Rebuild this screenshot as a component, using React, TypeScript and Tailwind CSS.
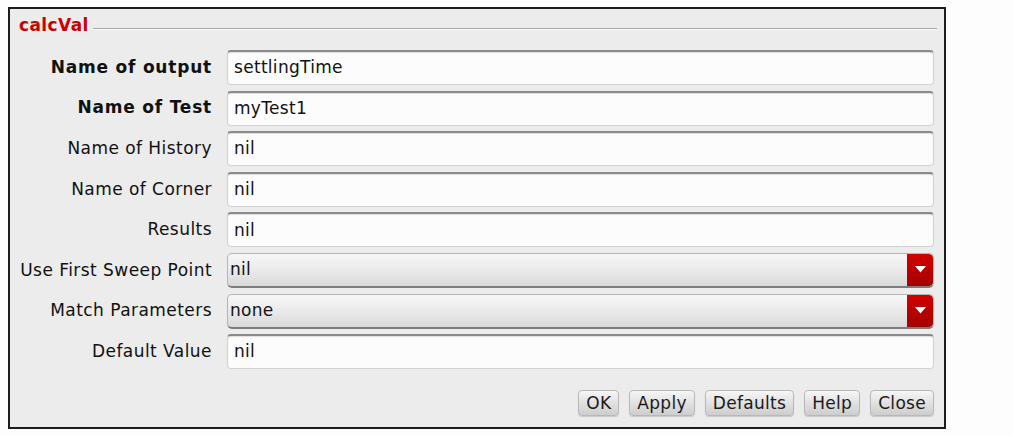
import React from "react";

const font = { fontFamily: '"DejaVu Sans", "Liberation Sans", sans-serif' };

type Row = { label: string; value: string; bold?: boolean; select?: boolean };

const rows: Row[] = [
  { label: "Name of output", value: "settlingTime", bold: true },
  { label: "Name of Test", value: "myTest1", bold: true },
  { label: "Name of History", value: "nil" },
  { label: "Name of Corner", value: "nil" },
  { label: "Results", value: "nil" },
  { label: "Use First Sweep Point", value: "nil", select: true },
  { label: "Match Parameters", value: "none", select: true },
  { label: "Default Value", value: "nil" },
];

function TextField({ value }: { value: string }) {
  return (
    <div className="flex-1 h-full flex items-center pl-[6px] bg-[#fcfcfc] rounded-[4px] border border-[#d2d2d2] border-t-[#8a8a8a] border-t-2 shadow-[inset_0_1px_1px_rgba(0,0,0,0.12)] text-[17px] tracking-[0.3px] text-[#111]">
      {value}
    </div>
  );
}

function SelectField({ value }: { value: string }) {
  return (
    <div className="flex-1 h-full flex rounded-[5px] border border-[#b4b4b4] border-b-2 border-b-[#7c7c7c] bg-gradient-to-b from-[#f7f7f7] via-[#eaeaea] to-[#d9d9d9] overflow-hidden">
      <div className="flex-1 flex items-center pl-[2px] text-[17px] tracking-[0.3px] text-[#111]">{value}</div>
      <div className="w-[26px] flex items-center justify-center bg-gradient-to-b from-[#d00000] to-[#a40000] rounded-r-[4px]">
        <svg width="11" height="7" viewBox="0 0 11 7">
          <path d="M0 0 H11 L5.5 6.5 Z" fill="#ffffff" />
        </svg>
      </div>
    </div>
  );
}

function Btn({ children }: { children: React.ReactNode }) {
  return (
    <button className="h-[26px] px-[7px] rounded-[4px] border border-[#b8b8b8] bg-gradient-to-b from-[#f6f6f6] to-[#cdcdcd] text-[17px] tracking-[0.3px] leading-none text-[#1a1a1a] shadow-[0_1px_1px_rgba(0,0,0,0.15)]">
      {children}
    </button>
  );
}

export default function App() {
  return (
    <div className="w-[1013px] h-[436px] bg-[#fdfdfd] pt-[7px] pl-[8px]" style={font}>
      <div className="w-[938px] h-[422px] border-2 border-[#1c1c1c] bg-[#ececec] flex flex-col">
        {/* Group title */}
        <div className="flex items-center h-[26px] mt-[4px] pl-[9px] pr-[7px]">
          <span className="text-[17px] font-bold text-[#cc0000] tracking-[0.4px]">calcVal</span>
          <div className="flex-1 ml-[4px] mt-[6px] h-[2px] border-t border-[#a8a8a8] border-b border-b-[#fafafa]" />
        </div>

        {/* Fields */}
        <div className="flex flex-col gap-[5.6px] mt-[11px] pr-[10px]">
          {rows.map((r) => (
            <div key={r.label} className="flex items-center h-[35px]">
              <div
                className={`w-[202px] text-right text-[17px] text-[#111] ${
                  r.bold ? "font-bold tracking-[0.8px]" : "tracking-[0.45px]"
                }`}
              >
                {r.label}
              </div>
              <div className="flex-1 h-full ml-[15px] flex">
                {r.select ? <SelectField value={r.value} /> : <TextField value={r.value} />}
              </div>
            </div>
          ))}
        </div>

        {/* Buttons */}
        <div className="flex justify-end gap-[10px] pr-[10px] mt-[21px]">
          <Btn>OK</Btn>
          <Btn>Apply</Btn>
          <Btn>Defaults</Btn>
          <Btn>Help</Btn>
          <Btn>Close</Btn>
        </div>
      </div>
    </div>
  );
}
